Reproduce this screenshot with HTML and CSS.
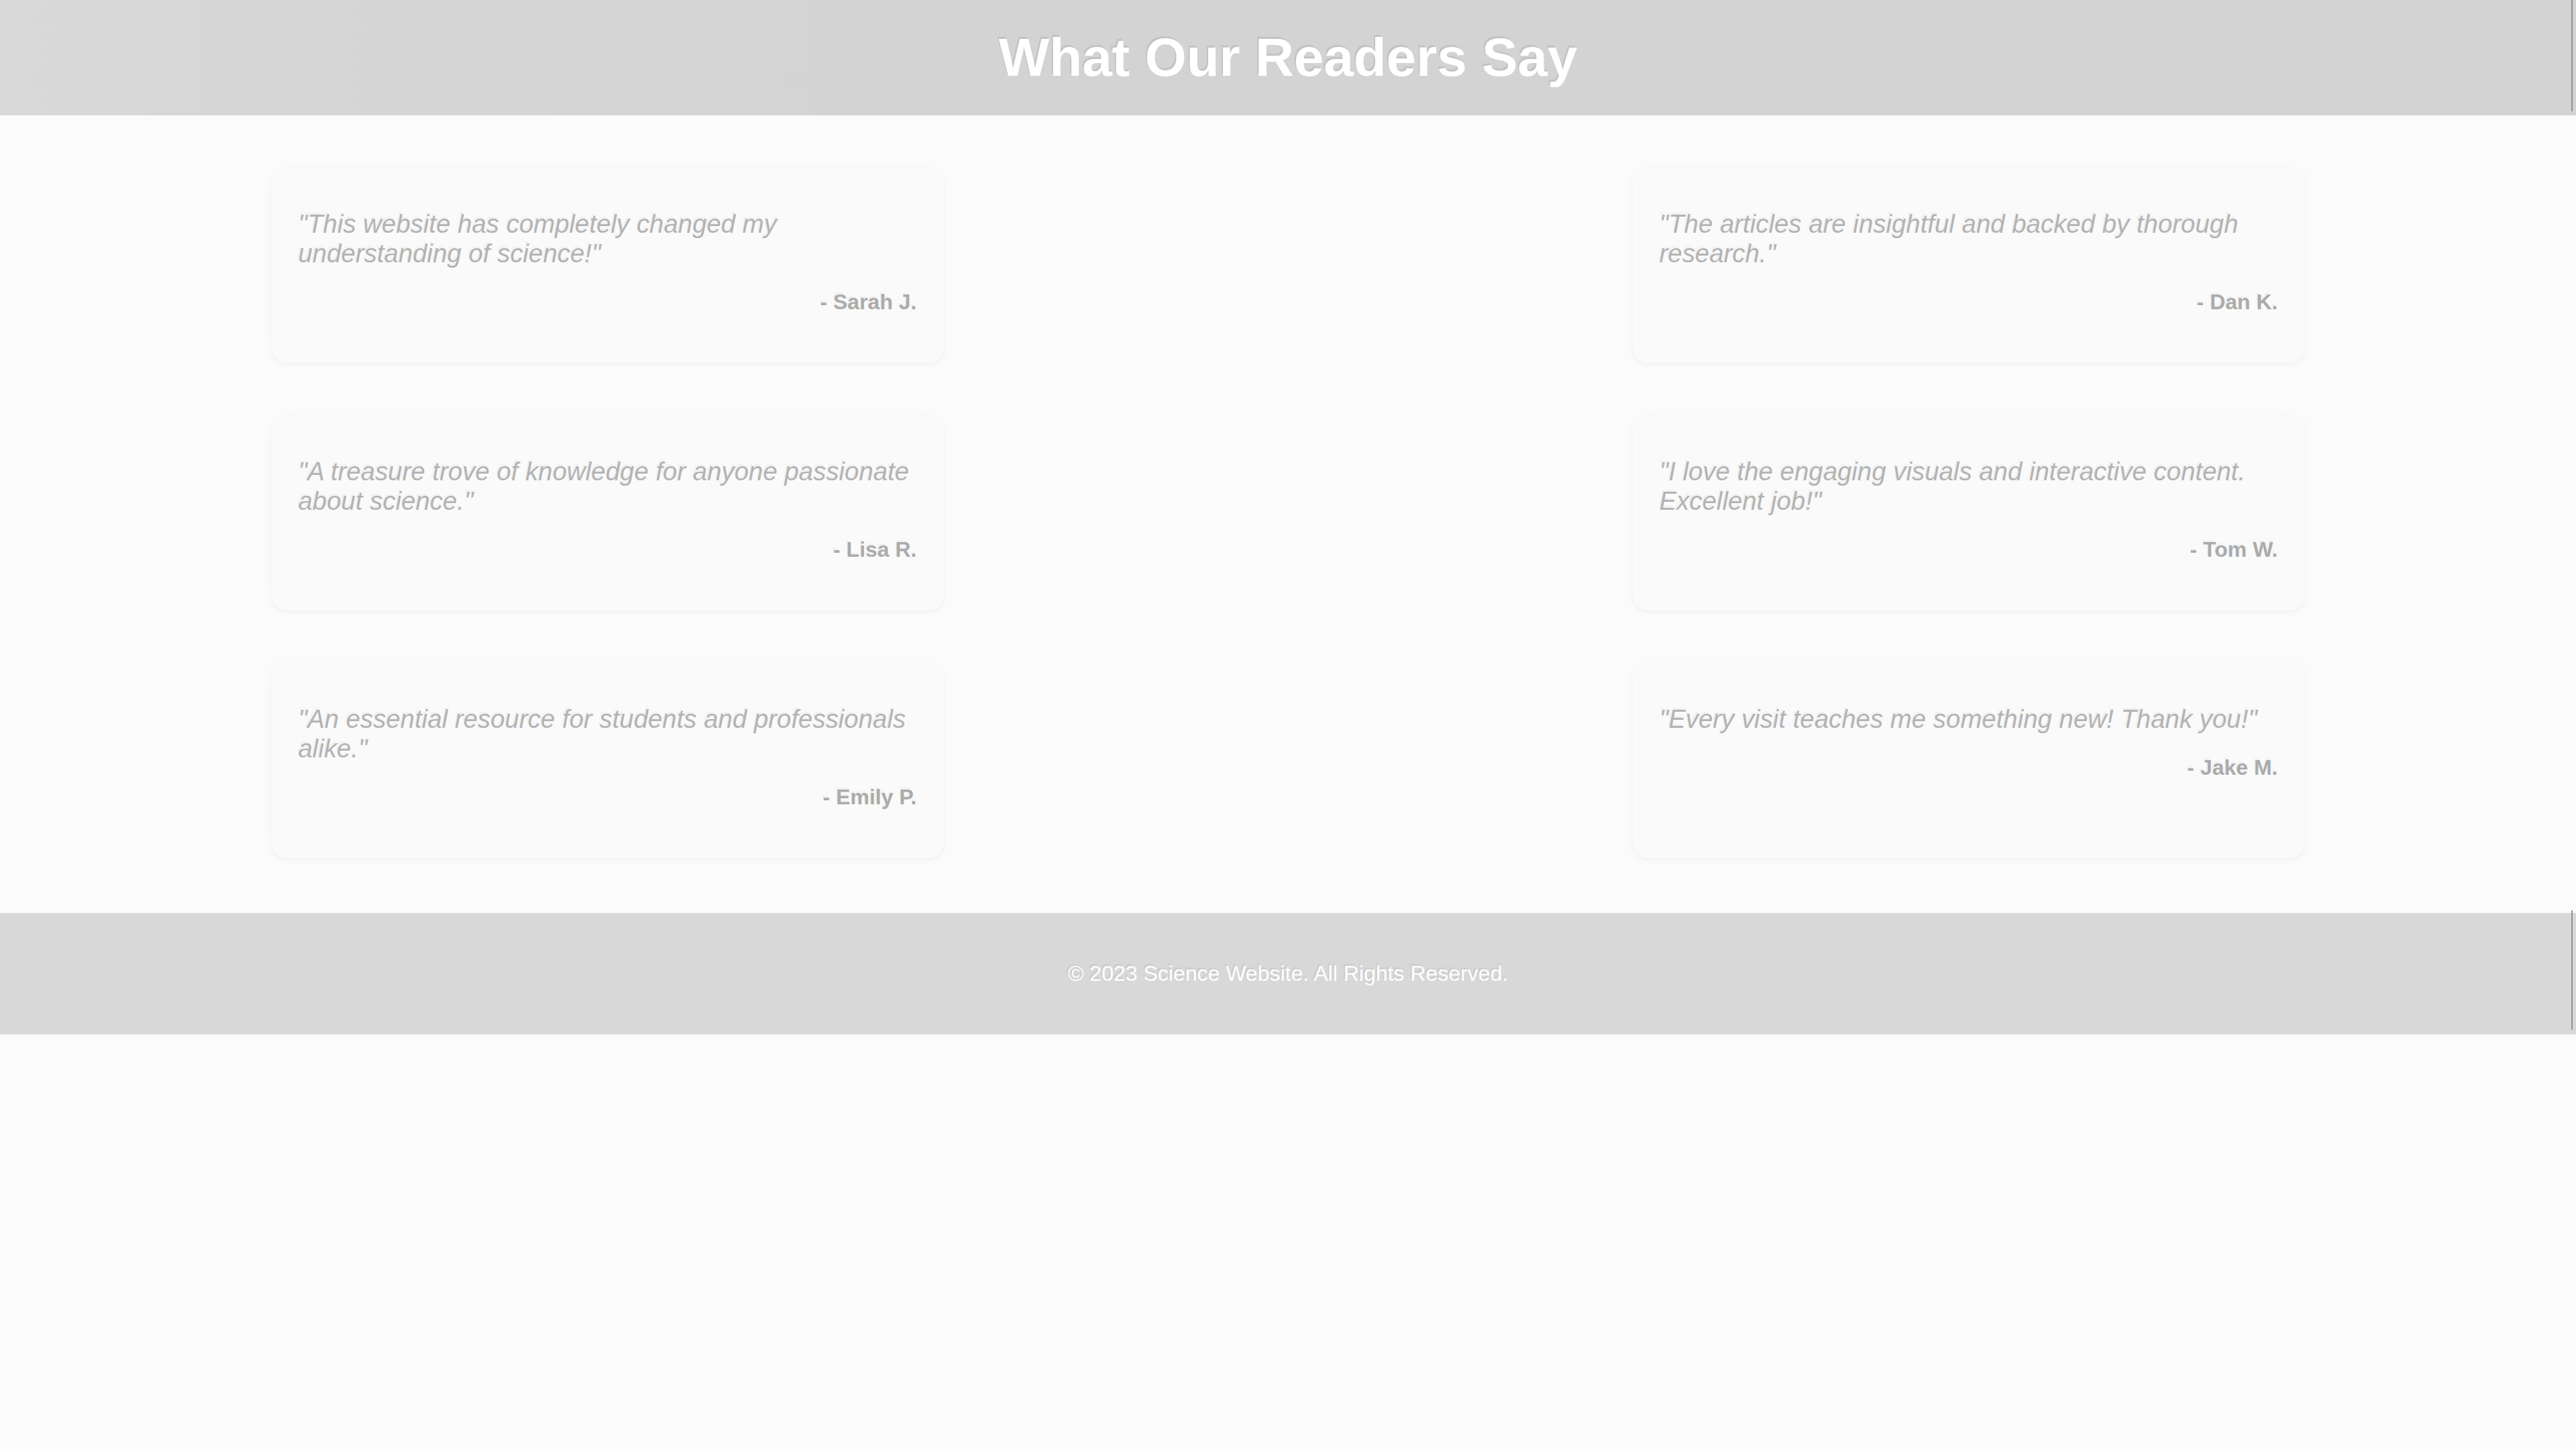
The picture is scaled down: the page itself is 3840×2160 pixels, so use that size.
FILE: index.html
```html
<!DOCTYPE html>
<html lang="en">
<head>
<meta charset="utf-8">
<title>What Our Readers Say</title>
<link rel="stylesheet" href="styles.css">
</head>
<body>
<header class="site-header">
  <h1 class="title">What Our Readers Say</h1>
</header>
<main class="testimonials">
  <div class="grid">
    <article class="card">
      <p class="quote">"This website has completely changed my understanding of science!"</p>
      <p class="author">- Sarah J.</p>
    </article>
    <article class="card">
      <p class="quote">"The articles are insightful and backed by thorough research."</p>
      <p class="author">- Dan K.</p>
    </article>
    <article class="card">
      <p class="quote">"A treasure trove of knowledge for anyone passionate about science."</p>
      <p class="author">- Lisa R.</p>
    </article>
    <article class="card">
      <p class="quote">"I love the engaging visuals and interactive content. Excellent job!"</p>
      <p class="author">- Tom W.</p>
    </article>
    <article class="card">
      <p class="quote">"An essential resource for students and professionals alike."</p>
      <p class="author">- Emily P.</p>
    </article>
    <article class="card">
      <p class="quote">"Every visit teaches me something new! Thank you!"</p>
      <p class="author">- Jake M.</p>
    </article>
  </div>
</main>
<footer class="site-footer">
  <p class="copy">© 2023 Science Website. All Rights Reserved.</p>
</footer>
</body>
</html>
```

FILE: styles.css
```css
html, body {
  margin: 0;
  padding: 0;
}

body {
  background: #fbfbfb;
  font-family: "Liberation Sans", Arial, sans-serif;
  min-height: 2160px;
}

.site-header {
  position: relative;
  padding: 40px;
  text-align: center;
  background: linear-gradient(90deg, #d9d9d9 0%, #d5d5d5 15%, #d3d3d3 40%, #d3d3d3 100%);
}

.site-header::after,
.site-footer::after {
  content: "";
  position: absolute;
  right: 5px;
  width: 2px;
  background: #929292;
}

.site-header::after {
  top: 0;
  bottom: 6px;
}

.site-footer::after {
  top: -4px;
  bottom: 7px;
}

.title {
  margin: 0;
  font-size: 80px;
  font-weight: bold;
  color: #ffffff;
  text-shadow: -2px -3px 0 rgba(120, 120, 120, 0.18);
}

.testimonials {
  padding: 80px 0 82px;
}

.grid {
  display: grid;
  grid-template-columns: 1002px 1002px;
  justify-content: space-between;
  row-gap: 80px;
  width: 3031px;
  margin: 0 auto;
}

.card {
  padding: 40px;
  border-radius: 22px;
  background: #fafafa;
  box-shadow: 0 3px 5px rgba(0, 0, 0, 0.03), 0 0 22px rgba(0, 0, 0, 0.025);
}

.quote {
  margin: 20px 0;
  font-size: 38.4px;
  font-style: italic;
  color: #b3b3b3;
  text-shadow: -2px -3px 0 rgba(0, 0, 0, 0.05);
}

.author {
  margin: 32px 0;
  font-size: 32px;
  font-weight: bold;
  text-align: right;
  color: #ababab;
  text-shadow: -2px -3px 0 rgba(0, 0, 0, 0.05);
}

.site-footer {
  position: relative;
  padding: 40px;
  text-align: center;
  background: #d8d8d8;
}

.copy {
  margin: 32px 0;
  font-size: 32px;
  color: #ffffff;
  text-shadow: -2px -3px 0 rgba(120, 120, 120, 0.15);
}
```
